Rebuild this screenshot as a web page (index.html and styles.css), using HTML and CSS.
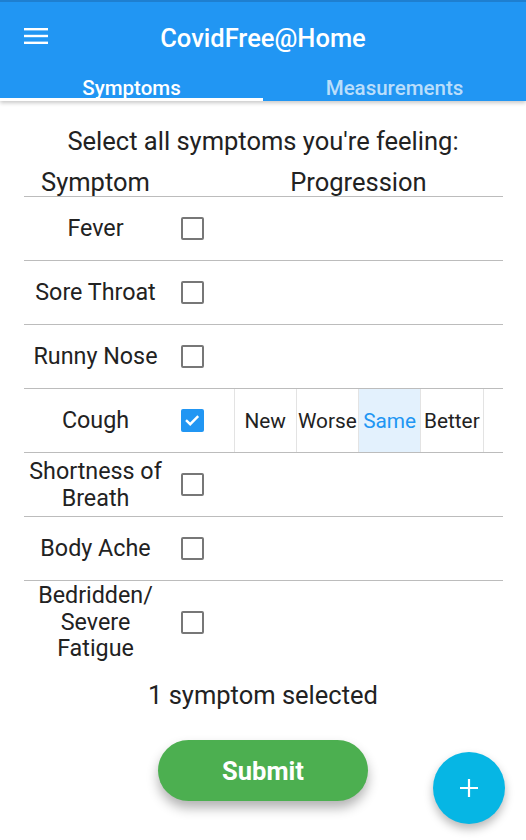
FILE: index.html
```html
<!DOCTYPE html>
<html>
<head>
<meta charset="utf-8">
<link rel="stylesheet" href="styles.css">
</head>
<body>
<header class="appbar">
  <div class="toolbar">
    <svg class="menu" width="24" height="16" viewBox="0 0 24 16"><rect x="0" y="0" width="24" height="2.4" fill="#fff"/><rect x="0" y="6.8" width="24" height="2.4" fill="#fff"/><rect x="0" y="13.6" width="24" height="2.4" fill="#fff"/></svg>
    <h1 class="title">CovidFree@Home</h1>
  </div>
  <nav class="tabs">
    <div class="tab active">Symptoms</div>
    <div class="tab">Measurements</div>
  </nav>
</header>
<main class="content">
  <p class="prompt">Select all symptoms you're feeling:</p>
  <div class="table">
    <div class="row head">
      <div class="c-name">Symptom</div>
      <div class="c-box"></div>
      <div class="c-prog">Progression</div>
    </div>
    <div class="row">
      <div class="c-name">Fever</div>
      <div class="c-box"><span class="cb"></span></div>
      <div class="c-prog"></div>
    </div>
    <div class="row">
      <div class="c-name">Sore Throat</div>
      <div class="c-box"><span class="cb"></span></div>
      <div class="c-prog"></div>
    </div>
    <div class="row">
      <div class="c-name">Runny Nose</div>
      <div class="c-box"><span class="cb"></span></div>
      <div class="c-prog"></div>
    </div>
    <div class="row">
      <div class="c-name">Cough</div>
      <div class="c-box"><span class="cb checked"><svg width="22" height="22" viewBox="0 0 22 22"><path d="M5 11.2 L9.2 15.2 L17.2 7.2" fill="none" stroke="#fff" stroke-width="2.4"/></svg></span></div>
      <div class="c-prog">
        <div class="seg">
          <div class="opt">New</div>
          <div class="opt">Worse</div>
          <div class="opt sel">Same</div>
          <div class="opt">Better</div>
        </div>
      </div>
    </div>
    <div class="row">
      <div class="c-name">Shortness of Breath</div>
      <div class="c-box"><span class="cb"></span></div>
      <div class="c-prog"></div>
    </div>
    <div class="row">
      <div class="c-name">Body Ache</div>
      <div class="c-box"><span class="cb"></span></div>
      <div class="c-prog"></div>
    </div>
    <div class="row last">
      <div class="c-name">Bedridden/<br>Severe<br>Fatigue</div>
      <div class="c-box"><span class="cb"></span></div>
      <div class="c-prog"></div>
    </div>
  </div>
  <p class="status">1 symptom selected</p>
  <div class="actions">
    <button class="submit">Submit</button>
  </div>
</main>
<button class="fab"><svg width="22" height="22" viewBox="0 0 22 22"><path d="M11 2 V20 M2 11 H20" stroke="#fff" stroke-width="2.2"/></svg></button>
</body>
</html>
```
FILE: styles.css
```css
* { box-sizing: border-box; }
html, body { margin: 0; padding: 0; }
body {
  font-family: Roboto, "Liberation Sans", sans-serif;
  color: #222;
  background: #fff;
  width: 526px;
  height: 840px;
  overflow: hidden;
  position: relative;
}
.appbar {
  background: #2196f3;
  border-top: 2px solid #1e7fd0;
  box-shadow: 0 2px 4px rgba(0,0,0,0.22);
}
.toolbar {
  height: 64px;
  display: flex;
  align-items: center;
  position: relative;
  padding-left: 24px;
}
.menu { display: block; margin-top: 3px; }
.title {
  position: absolute;
  left: 0; right: 0;
  top: 21px;
  margin: 0;
  text-align: center;
  color: #fff;
  font-size: 25.5px;
  line-height: 30px;
  font-weight: 500;
}
.tabs {
  display: flex;
  height: 35px;
}
.tab {
  flex: 1;
  text-align: center;
  color: rgba(255,255,255,0.7);
  font-size: 20.5px;
  font-weight: 500;
  padding-top: 10px;
  line-height: 24px;
}
.tab.active {
  color: #fff;
  border-bottom: 3px solid #fff;
}
.content {
  display: flex;
  flex-direction: column;
  align-items: center;
}
.prompt {
  margin: 25px 0 0;
  font-size: 25.5px;
  line-height: 30px;
}
.table {
  width: 479px;
  margin-top: 11px;
}
.row {
  display: grid;
  grid-template-columns: 144px 47px 1fr;
  height: 64px;
  border-bottom: 1px solid #bcbcbc;
  align-items: center;
}
.row.head {
  height: 30px;
  align-items: end;
  line-height: 28px;
}
.row.last {
  border-bottom: none;
  height: 82px;
}
.c-name {
  text-align: center;
  font-size: 23.3px;
  line-height: 26.5px;
}
.head .c-name, .head .c-prog { font-size: 25.5px; line-height: 28px; }
.c-box {
  display: flex;
  justify-content: flex-start;
  padding-left: 13px;
}
.cb {
  width: 23px;
  height: 23px;
  border: 2px solid #777;
  border-radius: 2px;
  display: block;
}
.cb.checked {
  background: #2196f3;
  border: none;
  border-radius: 2px;
}
.cb svg { display: block; }
.c-prog {
  text-align: center;
  height: 100%;
  display: flex;
  align-items: center;
  justify-content: center;
}
.head .c-prog { align-items: flex-end; }
.seg {
  display: flex;
  height: 100%;
  width: 250px;
  border-left: 1px solid #e3e3e3;
  border-right: 1px solid #e3e3e3;
}
.opt {
  flex: 1;
  display: flex;
  align-items: center;
  justify-content: center;
  font-size: 20.8px;
  color: #222;
  white-space: nowrap;
}
.opt + .opt { border-left: 1px solid #e3e3e3; }
.opt.sel {
  background: #e3f1fd;
  color: #2196f3;
}
.status {
  margin: 17px 0 0;
  font-size: 25.5px;
  line-height: 30px;
}
.actions { margin-top: 30px; }
.submit {
  width: 210px;
  height: 61px;
  border: none;
  border-radius: 31px;
  background: #4caf50;
  color: #fff;
  font-family: Roboto, "Liberation Sans", sans-serif;
  font-size: 25.5px;
  font-weight: 700;
  box-shadow: 0 7px 12px rgba(0,0,0,0.3);
}
.fab {
  position: absolute;
  left: 433px;
  top: 752px;
  width: 72px;
  height: 72px;
  border-radius: 50%;
  border: none;
  background: #06b6e4;
  display: flex;
  align-items: center;
  justify-content: center;
  box-shadow: 0 5px 10px rgba(0,0,0,0.28);
  padding: 0;
}
.fab svg { display: block; }
```
